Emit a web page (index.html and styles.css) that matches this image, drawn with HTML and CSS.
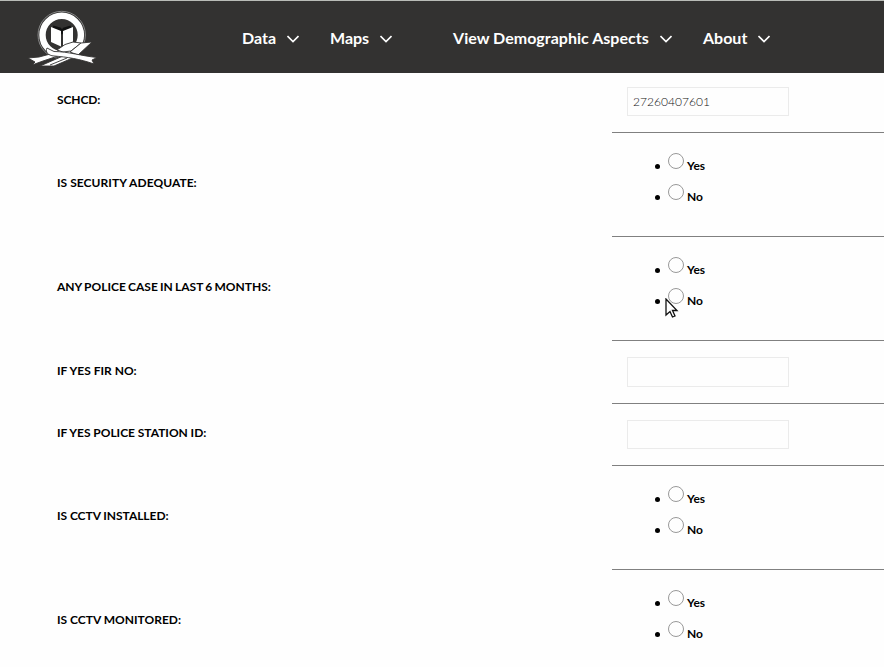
FILE: index.html
```html
<!DOCTYPE html>
<html lang="en">
<head>
<meta charset="utf-8">
<title>School Security</title>
<link rel="stylesheet" href="styles.css">
</head>
<body>
<header class="topbar">
  <svg class="logo" width="74" height="60" viewBox="0 0 74 60" aria-hidden="true">
    <circle class="halo" cx="34.700" cy="26" r="23.700"/>
    <circle class="ring" cx="34.700" cy="26" r="19.200"/>
    <path class="inner" d="M26 18L33 20L35 23L37 20L44 18"/>
    <path class="book" d="M24 18L34 22V37.500L24 33ZM46 18L36 22V37.500L46 33Z"/>
    <path class="ribbon" d="M30 41L38 35.500L46 33L54 34L44 42L36 43Z"/>
    <path class="ribbon" d="M43 43L54 34L65 33L51 46Z"/>
    <path class="ribbon" d="M13 57L36 47L48 48L27 57Z"/>
    <path class="crease" d="M23 56L40 49"/>
    <path class="ribbon" d="M1 49L12 48L27 44L34 46L16 52L5 56L8 53Z"/>
    <path class="ribbon" d="M20 39L27 42.500C41 42.500 55 47 70 48.500L65 51L67 55C53 50 40 48 27 47C21 46.500 18 43 20 39Z"/>
  </svg>
  <nav class="menu">
    <a class="item data">Data<svg class="chevron" viewBox="0 0 12 8"><path d="M.5 1L6 6.500L11.500 1"/></svg></a>
    <a class="item maps">Maps<svg class="chevron" viewBox="0 0 12 8"><path d="M.5 1L6 6.500L11.500 1"/></svg></a>
    <a class="item view">View Demographic Aspects<svg class="chevron" viewBox="0 0 12 8"><path d="M.5 1L6 6.500L11.500 1"/></svg></a>
    <a class="item about">About<svg class="chevron" viewBox="0 0 12 8"><path d="M.5 1L6 6.500L11.500 1"/></svg></a>
  </nav>
</header>
<main class="form">
  <div class="row first"><label class="label">SCHCD:</label><div class="field"><input class="text" type="text" value="27260407601"></div></div>
  <div class="row choice"><span class="label security">IS SECURITY ADEQUATE:</span><div class="field"><ul class="options"><li><input type="radio" name="sec"><span>Yes</span></li><li><input type="radio" name="sec"><span>No</span></li></ul></div></div>
  <div class="row choice"><span class="label case">ANY POLICE CASE IN LAST 6 MONTHS:</span><div class="field"><ul class="options"><li><input type="radio" name="case"><span>Yes</span></li><li><input type="radio" name="case"><span>No</span></li></ul></div></div>
  <div class="row fir"><label class="label">IF YES FIR NO:</label><div class="field"><input class="text tall" type="text"></div></div>
  <div class="row station"><label class="label">IF YES POLICE STATION ID:</label><div class="field"><input class="text" type="text"></div></div>
  <div class="row choice"><span class="label installed">IS CCTV INSTALLED:</span><div class="field"><ul class="options"><li><input type="radio" name="cctv"><span>Yes</span></li><li><input type="radio" name="cctv"><span>No</span></li></ul></div></div>
  <div class="row choice"><span class="label">IS CCTV MONITORED:</span><div class="field"><ul class="options"><li><input type="radio" name="mon"><span>Yes</span></li><li><input type="radio" name="mon"><span>No</span></li></ul></div></div>
</main>
<svg class="pointer" width="14" height="21" viewBox="0 0 14 21" aria-hidden="true"><path d="M1 1V17L5 13.500L7.500 19L10 18L7.500 12.500H12Z"/></svg>
</body>
</html>
```
FILE: styles.css
```css
* { box-sizing: border-box; }
html { height: 100%; overflow: hidden; }
body {
  margin: 0;
  height: 667px;
  overflow: hidden;
  background: #fefefe;
  color: #000;
  font-family: Lato, sans-serif;
}
.topbar {
  display: flex;
  height: 73px;
  border-top: 1px solid #b9bcb7;
  background: #333231;
}
.logo { margin: 8px 0 0 27px; flex: none; }
.ring { fill: none; stroke: #fff; stroke-width: 6.4; }
.halo { fill: #333231; stroke: #888; stroke-width: 1; }
.book { fill: #fff; }
.inner { fill: none; stroke: #111; stroke-width: 3; }
.ribbon { fill: #fff; stroke: #333231; stroke-width: .9; }
.crease { fill: none; stroke: #333231; stroke-width: .9; }
.menu { display: flex; margin-left: 141px; }
.item {
  display: flex;
  align-items: center;
  height: 73px;
  color: #fff;
  font-size: 16px;
  font-weight: 700;
  white-space: nowrap;
  justify-content: space-between;
}
.data { width: 57px; }
.maps { width: 62px; margin-left: 31px; }
.view { width: 219px; margin-left: 61px; letter-spacing: .02px; }
.about { width: 67px; margin-left: 31px; }
.chevron { width: 12px; height: 8px; margin-top: 3px; flex: none; }
.chevron path { fill: none; stroke: #fff; stroke-width: 1.6; }
.row { display: flex; }
.label {
  width: 555px;
  margin-left: 57px;
  flex: none;
  align-self: center;
  padding-bottom: 5px;
  font-size: 12px;
  line-height: 16px;
  font-weight: 700;
}
.field { flex: 1; border-bottom: 1px solid #808080; }
.first { height: 60px; }
.first .label { padding-bottom: 7px; letter-spacing: -.1px; }
.first .field { padding-top: 14px; }
.security { letter-spacing: .05px; }
.case { word-spacing: -.7px; }
.installed { letter-spacing: -.05px; }
.choice { height: 104px; }
.fir { height: 63px; }
.fir .label { padding-bottom: 3px; }
.station { height: 62px; }
.station .label { word-spacing: -.2px; }
.fir .field, .station .field { padding-top: 16px; }
.text {
  display: block;
  width: 162px;
  height: 29px;
  margin-left: 15px;
  padding: 0 5px 1px;
  border: 1px solid #ebebeb;
  background: #fefefe;
  color: #111;
  font: 300 12px Lato, sans-serif;
  letter-spacing: .05px;
  outline: 0;
}
.tall { height: 30px; }
.options { margin: 0; padding: 17px 0 0 43px; list-style: none; }
.options li {
  display: flex;
  align-items: center;
  height: 31px;
  font-size: 12px;
  font-weight: 700;
}
.options li::before {
  content: "";
  width: 5px;
  height: 5px;
  margin: 1px 8px 0 0;
  border-radius: 50%;
  background: #000;
}
.options input {
  appearance: none;
  width: 16px;
  height: 16px;
  margin: 0 3px 10px 0;
  border: 1px solid #999;
  border-radius: 50%;
  background: #fefefe;
}
.pointer { position: absolute; left: 665px; top: 298px; }
.pointer path { fill: #fff; stroke: #111; stroke-width: 1.3; }
```
